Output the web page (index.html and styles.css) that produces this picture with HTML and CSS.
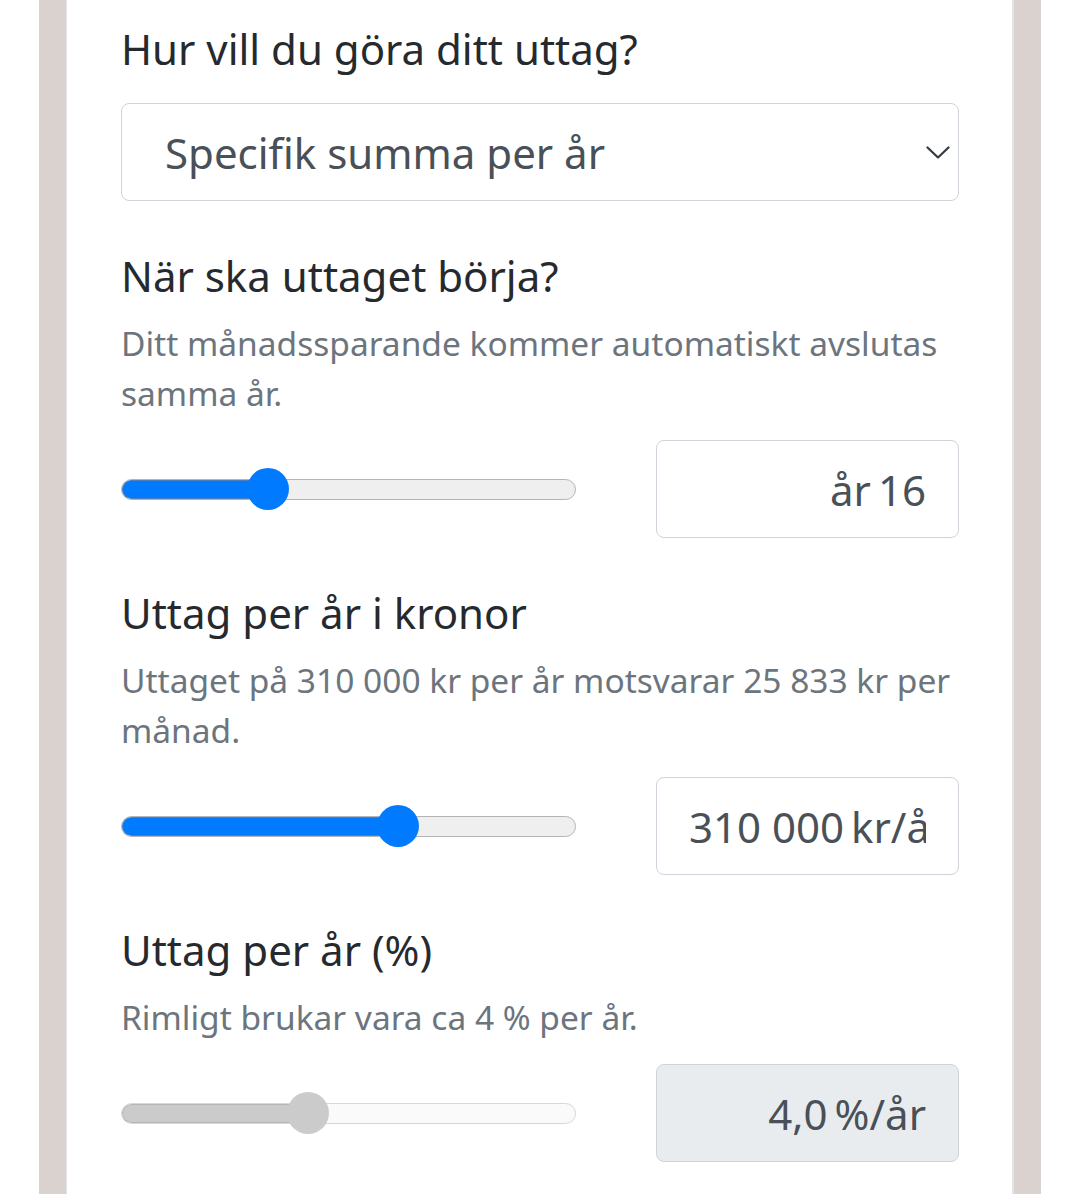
FILE: index.html
```html
<!DOCTYPE html>
<html lang="sv">
<head>
<meta charset="utf-8">
<link rel="stylesheet" href="styles.css">
</head>
<body>
<div class="frame">
  <div class="card">
    <section class="field first">
      <h2 class="label">Hur vill du göra ditt uttag?</h2>
      <div class="select">
        <span class="select-text">Specifik summa per år</span>
        <svg class="chevron" width="24" height="13" viewBox="0 0 24 13"><path d="M1.5 1.5 L12 11.5 L22.5 1.5" fill="none" stroke="#343a40" stroke-width="2.2" stroke-linecap="round" stroke-linejoin="round"/></svg>
      </div>
    </section>

    <section class="field">
      <h2 class="label">När ska uttaget börja?</h2>
      <p class="help">Ditt månadssparande kommer automatiskt avslutas samma år.</p>
      <div class="row">
        <div class="slider">
          <div class="track"><div class="fill" style="width:147px"></div></div>
          <div class="thumb" style="left:147px"></div>
        </div>
        <div class="value"><span class="value-text">år&#8239;16</span></div>
      </div>
    </section>

    <section class="field">
      <h2 class="label">Uttag per år i kronor</h2>
      <p class="help">Uttaget på 310 000 kr per år motsvarar 25 833 kr per månad.</p>
      <div class="row">
        <div class="slider">
          <div class="track"><div class="fill" style="width:277px"></div></div>
          <div class="thumb" style="left:277px"></div>
        </div>
        <div class="value overflow"><span class="value-text">310&#160;000&#8239;kr/år</span></div>
      </div>
    </section>

    <section class="field">
      <h2 class="label">Uttag per år (%)</h2>
      <p class="help">Rimligt brukar vara ca 4 % per år.</p>
      <div class="row">
        <div class="slider disabled">
          <div class="track"><div class="fill" style="width:187px"></div></div>
          <div class="thumb" style="left:187px"></div>
        </div>
        <div class="value readonly"><span class="value-text">4,0&#8239;%/år</span></div>
      </div>
    </section>
  </div>
</div>
</body>
</html>
```

FILE: styles.css
```css
html, body {
  margin: 0;
  padding: 0;
  background: #ffffff;
}

body {
  font-family: "Noto Sans", "Open Sans", sans-serif;
  color: #212529;
  height: 1194px;
  overflow: hidden;
}

.frame {
  margin-left: 39px;
  width: 1002px;
  min-height: 1194px;
  background: #dad2ce;
  box-sizing: border-box;
  padding-left: 27px;
  padding-right: 27px;
}

.card {
  background: #ffffff;
  min-height: 1194px;
  border-left: 1px solid #e4e4e4;
  border-right: 2px solid #e4e4e4;
  box-sizing: border-box;
  padding: 0 53px 0 54px;
}

.field {
  padding-top: 45px;
}

.field.first {
  padding-top: 19px;
}

.label {
  margin: 0;
  font-size: 42px;
  font-weight: 400;
  line-height: 60px;
  color: #262a2e;
}

.help {
  margin: 12px 0 0;
  font-size: 33.5px;
  line-height: 50px;
  color: #6c757d;
}

.select {
  margin-top: 24px;
  height: 98px;
  border: 1.5px solid #ced4da;
  border-radius: 8px;
  box-sizing: border-box;
  display: flex;
  align-items: center;
  justify-content: space-between;
  padding: 0 8px 0 43px;
}

.select-text {
  font-size: 42px;
  color: #495057;
}

.chevron {
  display: block;
}

.row {
  margin-top: 22px;
  display: flex;
  align-items: center;
  justify-content: space-between;
}

.slider {
  position: relative;
  width: 455px;
  height: 42px;
  display: flex;
  align-items: center;
}

.track {
  width: 100%;
  height: 21px;
  box-sizing: border-box;
  border: 1.5px solid #b4b4b4;
  border-radius: 11px;
  background: #efefef;
  overflow: hidden;
  position: relative;
}

.fill {
  height: 100%;
  background: #007bff;
  box-shadow: inset 0 0 0 1px #4a7fc0;
  border-radius: 11px 0 0 11px;
}

.thumb {
  position: absolute;
  top: 0;
  width: 42px;
  height: 42px;
  margin-left: -21px;
  border-radius: 50%;
  background: #007bff;
}

.slider.disabled .track {
  background: #fafafa;
  border-color: #d7d7d7;
}

.slider.disabled .fill {
  background: #cbcbcb;
  box-shadow: inset 0 0 0 1px #b5b5b5;
}

.slider.disabled .thumb {
  background: #cbcbcb;
}

.value {
  width: 303px;
  height: 98px;
  box-sizing: border-box;
  border: 1.5px solid #ced4da;
  border-radius: 8px;
  padding: 0 32px;
  display: flex;
  align-items: center;
  justify-content: flex-end;
  font-size: 42px;
  color: #495057;
  white-space: nowrap;
}

.value-text {
  display: block;
  min-width: 0;
  overflow: hidden;
  white-space: nowrap;
}

.value.overflow {
  justify-content: flex-start;
}

.value.readonly {
  background: #e9ecef;
}
```
